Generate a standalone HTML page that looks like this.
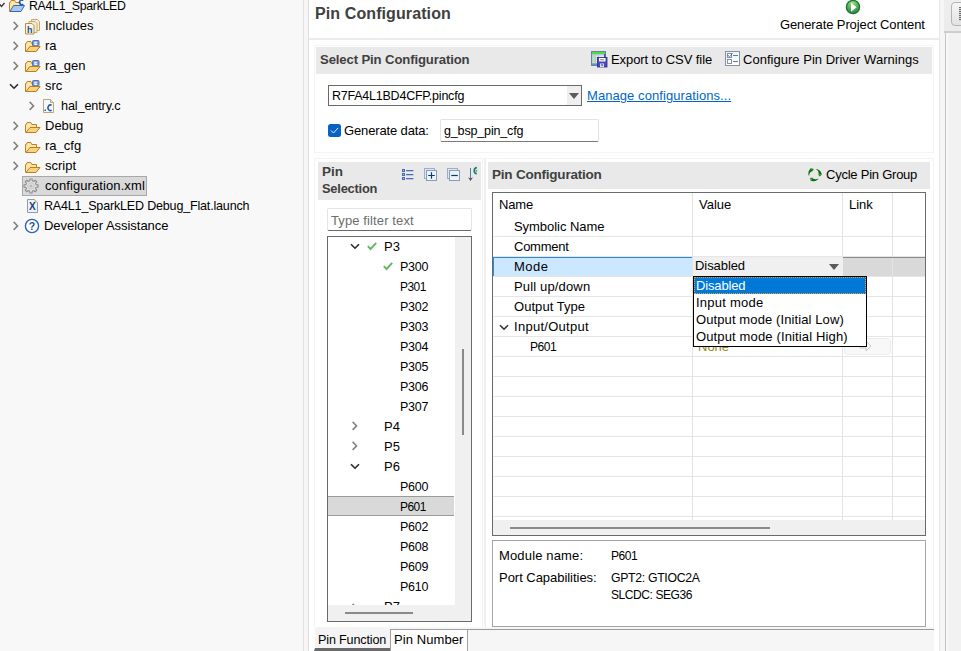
<!DOCTYPE html>
<html><head><meta charset="utf-8"><style>
html,body{margin:0;padding:0;width:961px;height:651px;overflow:hidden;background:#fff}
body{position:relative;font-family:"Liberation Sans",sans-serif}
.r{position:absolute;display:block}
.t{position:absolute;white-space:nowrap;font-family:"Liberation Sans",sans-serif}
svg.r{overflow:visible}
</style></head><body>
<div class="r" style="left:0px;top:0px;width:303px;height:651px;background:#f8f8f8"></div>
<div class="r" style="left:303px;top:0px;width:1px;height:651px;background:#e2e2e2"></div>
<div class="r" style="left:304px;top:0px;width:4px;height:651px;background:#f6f6f6"></div>
<div class="r" style="left:308px;top:0px;width:1px;height:651px;background:#dedede"></div>
<svg class="r" style="left:-2px;top:2px" width="7" height="7" viewBox="0 0 7 7"><path d="M0.5 1 L3.5 4.5 L6.5 1" fill="none" stroke="#333" stroke-width="1.3"/></svg>
<svg class="r" style="left:9px;top:-2px" width="16" height="16" viewBox="0 0 16 16"><path d="M0.5 13.5 V4.5 H1.2 L2.2 2.5 H5.8 L6.8 4.5 H11.5 V8" fill="#fbe7a8" stroke="#c27c22"/><path d="M1 13.5 L4.5 7.5 H15.5 L12 13.5 Z" fill="#a8c8f0" stroke="#3a68b8" stroke-linejoin="round"/><path d="M14.2 2.6 A2.2 2.4 0 1 0 14.2 6.2" fill="none" stroke="#2a5aa8" stroke-width="1.6"/></svg>
<div class="t" style="left:29px;top:-2px;font-size:13px;line-height:16px;font-weight:normal;color:#000;letter-spacing:-0.302px;transform:scaleX(0.9474);transform-origin:0.00px 0;">RA4L1_SparkLED</div>
<svg class="r" style="left:12px;top:21px" width="7" height="10" viewBox="0 0 7 10"><path d="M1.6 0.9 L5.6 4.9 L1.6 8.9" fill="none" stroke="#808080" stroke-width="1.5"/></svg>
<svg class="r" style="left:25px;top:18px" width="16" height="17" viewBox="0 0 16 17"><path d="M6.5 1.5 h6 l2 2 v9 h-8 z" fill="#f3ecd8" stroke="#c8a868"/><path d="M4 3.5 h6 l2 2 v9 h-8 z" fill="#f3ecd8" stroke="#c8a868"/><path d="M0.5 5.5 h6.5 l2 2 v8.5 h-8.5 z" fill="#f6f3ea" stroke="#b8903a"/><text x="4.7" y="14.6" font-size="9" font-family="Liberation Sans" font-weight="bold" fill="#1f4a8a" text-anchor="middle">h</text></svg>
<div class="t" style="left:45px;top:18px;font-size:13px;line-height:16px;font-weight:normal;color:#000;">Includes</div>
<svg class="r" style="left:12px;top:41px" width="7" height="10" viewBox="0 0 7 10"><path d="M1.6 0.9 L5.6 4.9 L1.6 8.9" fill="none" stroke="#808080" stroke-width="1.5"/></svg>
<svg class="r" style="left:25px;top:39px" width="16" height="16" viewBox="0 0 16 16"><g transform="translate(0 -1)"><path d="M0.5 13.5 V5.5 H1.2 L2.2 3.5 H5.8 L6.8 5.5 H11.5 V9" fill="#fbe7a8" stroke="#c27c22" stroke-width="1"/><path d="M1 13.5 L5 8.5 H15 L11 13.5 Z" fill="#f7d580" stroke="#c27c22" stroke-width="1" stroke-linejoin="round"/></g><rect x="7.5" y="1.5" width="6.5" height="5.5" rx="1" fill="#7a9ad8" stroke="#5272b2" stroke-width="1"/><path d="M12.2 3.2 h-2.2 v2.2 h2.2" fill="none" stroke="#fff" stroke-width="1.1"/><path d="M1 12.5 L5 7.5 H15 L11 12.5 Z" fill="#f7d580" stroke="#c27c22" stroke-width="1" stroke-linejoin="round"/></svg>
<div class="t" style="left:45px;top:38px;font-size:13px;line-height:16px;font-weight:normal;color:#000;">ra</div>
<svg class="r" style="left:12px;top:61px" width="7" height="10" viewBox="0 0 7 10"><path d="M1.6 0.9 L5.6 4.9 L1.6 8.9" fill="none" stroke="#808080" stroke-width="1.5"/></svg>
<svg class="r" style="left:25px;top:59px" width="16" height="16" viewBox="0 0 16 16"><g transform="translate(0 -1)"><path d="M0.5 13.5 V5.5 H1.2 L2.2 3.5 H5.8 L6.8 5.5 H11.5 V9" fill="#fbe7a8" stroke="#c27c22" stroke-width="1"/><path d="M1 13.5 L5 8.5 H15 L11 13.5 Z" fill="#f7d580" stroke="#c27c22" stroke-width="1" stroke-linejoin="round"/></g><rect x="7.5" y="1.5" width="6.5" height="5.5" rx="1" fill="#7a9ad8" stroke="#5272b2" stroke-width="1"/><path d="M12.2 3.2 h-2.2 v2.2 h2.2" fill="none" stroke="#fff" stroke-width="1.1"/><path d="M1 12.5 L5 7.5 H15 L11 12.5 Z" fill="#f7d580" stroke="#c27c22" stroke-width="1" stroke-linejoin="round"/></svg>
<div class="t" style="left:45px;top:58px;font-size:13px;line-height:16px;font-weight:normal;color:#000;">ra_gen</div>
<svg class="r" style="left:9px;top:83px" width="10" height="7" viewBox="0 0 10 7"><path d="M1 1.2 L5 5.2 L9 1.2" fill="none" stroke="#2a2a2a" stroke-width="1.6"/></svg>
<svg class="r" style="left:25px;top:79px" width="16" height="16" viewBox="0 0 16 16"><g transform="translate(0 -1)"><path d="M0.5 13.5 V5.5 H1.2 L2.2 3.5 H5.8 L6.8 5.5 H11.5 V9" fill="#fbe7a8" stroke="#c27c22" stroke-width="1"/><path d="M1 13.5 L5 8.5 H15 L11 13.5 Z" fill="#f7d580" stroke="#c27c22" stroke-width="1" stroke-linejoin="round"/></g><rect x="7.5" y="1.5" width="6.5" height="5.5" rx="1" fill="#7a9ad8" stroke="#5272b2" stroke-width="1"/><path d="M12.2 3.2 h-2.2 v2.2 h2.2" fill="none" stroke="#fff" stroke-width="1.1"/><path d="M1 12.5 L5 7.5 H15 L11 12.5 Z" fill="#f7d580" stroke="#c27c22" stroke-width="1" stroke-linejoin="round"/></svg>
<div class="t" style="left:45px;top:78px;font-size:13px;line-height:16px;font-weight:normal;color:#000;">src</div>
<svg class="r" style="left:28px;top:101px" width="7" height="10" viewBox="0 0 7 10"><path d="M1.6 0.9 L5.6 4.9 L1.6 8.9" fill="none" stroke="#808080" stroke-width="1.5"/></svg>
<svg class="r" style="left:42px;top:98px" width="13" height="16" viewBox="0 0 13 16"><path d="M1.5 1.5 h7 l3 3 v10 h-10 z" fill="#f4f7fc" stroke="#b8a878"/><path d="M8.5 1.5 v3 h3" fill="#e8e0c8" stroke="#b8a878"/><rect x="2.5" y="11.5" width="1.5" height="1.5" fill="#2a5aa8"/><path d="M9.6 7.4 A2.4 2.8 0 1 0 9.6 12.2" fill="none" stroke="#2a5aa8" stroke-width="1.6"/></svg>
<div class="t" style="left:61px;top:98px;font-size:13px;line-height:16px;font-weight:normal;color:#000;letter-spacing:-0.124px;transform:scaleX(0.9714);transform-origin:0.00px 0;">hal_entry.c</div>
<svg class="r" style="left:12px;top:121px" width="7" height="10" viewBox="0 0 7 10"><path d="M1.6 0.9 L5.6 4.9 L1.6 8.9" fill="none" stroke="#808080" stroke-width="1.5"/></svg>
<svg class="r" style="left:25px;top:119px" width="16" height="16" viewBox="0 0 16 16"><g transform="translate(0 0)"><path d="M0.5 13.5 V5.5 H1.2 L2.2 3.5 H5.8 L6.8 5.5 H11.5 V9" fill="#fbe7a8" stroke="#c27c22" stroke-width="1"/><path d="M1 13.5 L5 8.5 H15 L11 13.5 Z" fill="#f7d580" stroke="#c27c22" stroke-width="1" stroke-linejoin="round"/></g></svg>
<div class="t" style="left:45px;top:118px;font-size:13px;line-height:16px;font-weight:normal;color:#000;">Debug</div>
<svg class="r" style="left:12px;top:141px" width="7" height="10" viewBox="0 0 7 10"><path d="M1.6 0.9 L5.6 4.9 L1.6 8.9" fill="none" stroke="#808080" stroke-width="1.5"/></svg>
<svg class="r" style="left:25px;top:139px" width="16" height="16" viewBox="0 0 16 16"><g transform="translate(0 0)"><path d="M0.5 13.5 V5.5 H1.2 L2.2 3.5 H5.8 L6.8 5.5 H11.5 V9" fill="#fbe7a8" stroke="#c27c22" stroke-width="1"/><path d="M1 13.5 L5 8.5 H15 L11 13.5 Z" fill="#f7d580" stroke="#c27c22" stroke-width="1" stroke-linejoin="round"/></g></svg>
<div class="t" style="left:45px;top:138px;font-size:13px;line-height:16px;font-weight:normal;color:#000;">ra_cfg</div>
<svg class="r" style="left:12px;top:161px" width="7" height="10" viewBox="0 0 7 10"><path d="M1.6 0.9 L5.6 4.9 L1.6 8.9" fill="none" stroke="#808080" stroke-width="1.5"/></svg>
<svg class="r" style="left:25px;top:159px" width="16" height="16" viewBox="0 0 16 16"><g transform="translate(0 0)"><path d="M0.5 13.5 V5.5 H1.2 L2.2 3.5 H5.8 L6.8 5.5 H11.5 V9" fill="#fbe7a8" stroke="#c27c22" stroke-width="1"/><path d="M1 13.5 L5 8.5 H15 L11 13.5 Z" fill="#f7d580" stroke="#c27c22" stroke-width="1" stroke-linejoin="round"/></g></svg>
<div class="t" style="left:45px;top:158px;font-size:13px;line-height:16px;font-weight:normal;color:#000;">script</div>
<div class="r" style="left:22px;top:176px;width:125px;height:20px;background:#d9d9d9;border:1px solid #a8a8a8;box-sizing:border-box"></div>
<svg class="r" style="left:23px;top:178px" width="16" height="16" viewBox="0 0 16 16"><path d="M13.14 6.72 L15.01 6.89 L15.01 9.11 L13.14 9.28 L12.54 10.73 L13.74 12.17 L12.17 13.74 L10.73 12.54 L9.28 13.14 L9.11 15.01 L6.89 15.01 L6.72 13.14 L5.27 12.54 L3.83 13.74 L2.26 12.17 L3.46 10.73 L2.86 9.28 L0.99 9.11 L0.99 6.89 L2.86 6.72 L3.46 5.27 L2.26 3.83 L3.83 2.26 L5.27 3.46 L6.72 2.86 L6.89 0.99 L9.11 0.99 L9.28 2.86 L10.73 3.46 L12.17 2.26 L13.74 3.83 L12.54 5.27 Z" fill="#e2e2e2" stroke="#8e8e8e" stroke-width="1.1" stroke-linejoin="round"/><circle cx="8" cy="8" r="3.2" fill="none" stroke="#c4c4c4" stroke-width="1"/><circle cx="8" cy="8" r="1.6" fill="#b8b8b8"/></svg>
<div class="t" style="left:45px;top:178px;font-size:13px;line-height:16px;font-weight:normal;color:#000;letter-spacing:0.094px;">configuration.xml</div>
<svg class="r" style="left:26px;top:198px" width="13" height="16" viewBox="0 0 13 16"><path d="M1.5 1.5 h7 l3 3 v10 h-10 z" fill="#eef3fb" stroke="#8e9ab8"/><path d="M8.5 1.5 l3 3 h-3 z" fill="#f0c060"/><text x="6.3" y="12.3" font-size="10" font-family="Liberation Sans" font-weight="bold" fill="#1f3f78" text-anchor="middle">X</text></svg>
<div class="t" style="left:44px;top:198px;font-size:13px;line-height:16px;font-weight:normal;color:#000;letter-spacing:-0.181px;transform:scaleX(0.9630);transform-origin:0.00px 0;">RA4L1_SparkLED Debug_Flat.launch</div>
<svg class="r" style="left:12px;top:221px" width="7" height="10" viewBox="0 0 7 10"><path d="M1.6 0.9 L5.6 4.9 L1.6 8.9" fill="none" stroke="#808080" stroke-width="1.5"/></svg>
<svg class="r" style="left:24px;top:218px" width="16" height="16" viewBox="0 0 16 16"><circle cx="8" cy="8" r="6.6" fill="#fff" stroke="#2c64b4" stroke-width="1.4"/><text x="8" y="12.3" font-size="10.5" font-family="Liberation Sans" font-weight="bold" fill="#1f4f98" text-anchor="middle">?</text></svg>
<div class="t" style="left:44px;top:218px;font-size:13px;line-height:16px;font-weight:normal;color:#000;letter-spacing:-0.026px;">Developer Assistance</div>
<div class="r" style="left:309px;top:0px;width:631px;height:651px;background:#fff"></div>
<div class="t" style="left:315px;top:4px;font-size:16px;line-height:20px;font-weight:bold;color:#404040;letter-spacing:0.100px;">Pin Configuration</div>
<svg class="r" style="left:845px;top:-1px" width="16" height="16" viewBox="0 0 16 16"><defs><radialGradient id="gg" cx="0.45" cy="0.2" r="0.8"><stop offset="0" stop-color="#a0e080"/><stop offset="0.6" stop-color="#50a85a"/><stop offset="1" stop-color="#2e8a40"/></radialGradient></defs><circle cx="8" cy="8" r="6.6" fill="url(#gg)" stroke="#177a32" stroke-width="1.3"/><path d="M6 3.8 L11.6 8.3 L6 12.8 z" fill="#fff"/></svg>
<div class="t" style="left:780px;top:17px;font-size:13px;line-height:16px;font-weight:normal;color:#000;letter-spacing:-0.109px;">Generate Project Content</div>
<div class="r" style="left:309px;top:38px;width:631px;height:2px;background:#ececec"></div>
<div class="r" style="left:939px;top:0px;width:1px;height:651px;background:#e6e6e6"></div>
<div class="r" style="left:940px;top:0px;width:5px;height:651px;background:#f6f6f6"></div>
<div class="r" style="left:944px;top:0px;width:17px;height:31px;background:linear-gradient(#eeeeee,#ebebeb)"></div>
<div class="r" style="left:945px;top:31px;width:1px;height:620px;background:#c4c4c4"></div>
<div class="r" style="left:946px;top:33px;width:15px;height:618px;background:#f2f2f2"></div>
<div class="r" style="left:946px;top:33px;width:2px;height:618px;background:#f8f8f8"></div>
<div class="r" style="left:944px;top:31px;width:17px;height:2px;background:#cdcdcd"></div>
<div class="r" style="left:951px;top:2px;width:14px;height:24px;background:linear-gradient(#f6f6f6,#e2e2e2);border:1px solid #b4b4b4;border-radius:4px;box-sizing:border-box"></div>
<svg class="r" style="left:958px;top:7px" width="4" height="13" viewBox="0 0 4 13"><g fill="#6e6e6e"><rect x="1" y="0" width="3" height="1.2"/><rect x="1" y="2" width="3" height="1.2"/><rect x="1" y="4" width="3" height="1.2"/><rect x="1" y="6" width="3" height="1.2"/><rect x="1" y="8" width="3" height="1.2"/><rect x="1" y="10" width="3" height="1.2"/><rect x="1" y="12" width="3" height="1.2"/></g></svg>
<div class="r" style="left:314px;top:45px;width:620px;height:108px;border:1px solid #f4f4f4;box-sizing:border-box"></div>
<div class="r" style="left:316px;top:47px;width:616px;height:27px;background:#e9e9e9"></div>
<div class="t" style="left:320px;top:52px;font-size:13.5px;line-height:16px;font-weight:bold;color:#404040;letter-spacing:-0.129px;transform:scaleX(0.9725);transform-origin:0.00px 0;">Select Pin Configuration</div>
<svg class="r" style="left:591px;top:51px" width="17" height="17" viewBox="0 0 17 17"><rect x="0.5" y="0.5" width="14" height="14" fill="#b8c4d4" stroke="#7080a0"/><rect x="1" y="1" width="13" height="2" fill="#48e048"/><rect x="1.5" y="4.5" width="2.5" height="1.4" fill="#b8f0a8"/><rect x="5" y="4.5" width="2" height="1.4" fill="#e8f0ff"/><rect x="8" y="4.5" width="5" height="1.4" fill="#eef4ff"/><rect x="1.5" y="6.5" width="2.5" height="1.4" fill="#b8f0a8"/><rect x="5" y="6.5" width="2" height="1.4" fill="#e8f0ff"/><rect x="8" y="6.5" width="5" height="1.4" fill="#eef4ff"/><rect x="1.5" y="8.5" width="2.5" height="1.4" fill="#b8f0a8"/><rect x="5" y="8.5" width="2" height="1.4" fill="#e8f0ff"/><rect x="8" y="8.5" width="5" height="1.4" fill="#eef4ff"/><rect x="1.5" y="10.5" width="2.5" height="1.4" fill="#b8f0a8"/><rect x="5" y="10.5" width="2" height="1.4" fill="#e8f0ff"/><rect x="8" y="10.5" width="5" height="1.4" fill="#eef4ff"/><rect x="1" y="12.5" width="13" height="1.5" fill="#5a90e0"/><rect x="13" y="3" width="1.5" height="10" fill="#3a5a90"/><rect x="6.5" y="6.5" width="9.5" height="9.5" fill="#4a4ab8" stroke="#2a2a90" stroke-width="0.8"/><rect x="8" y="7" width="6.5" height="3.5" fill="#fafafa"/><rect x="9" y="8.2" width="4" height="1" fill="#888"/><rect x="9" y="12.5" width="4" height="3.5" fill="#d8d8e8"/><rect x="10.5" y="13" width="1.2" height="2" fill="#4a4ab8"/></svg>
<div class="t" style="left:611px;top:52px;font-size:13px;line-height:16px;font-weight:normal;color:#000;letter-spacing:-0.082px;">Export to CSV file</div>
<svg class="r" style="left:724px;top:50px" width="17" height="17" viewBox="0 0 17 17"><defs><linearGradient id="cg" x1="0" y1="0" x2="0" y2="1"><stop offset="0" stop-color="#e2f8fc"/><stop offset="1" stop-color="#ffffff"/></linearGradient></defs><rect x="1.5" y="1.5" width="14" height="14" fill="url(#cg)" stroke="#8890a8" stroke-width="1"/><rect x="3.5" y="3.5" width="4" height="4" fill="#fff" stroke="#8890a8"/><path d="M4 5.3 L5.4 7 L8.5 3.3" fill="none" stroke="#203a60" stroke-width="1" stroke-dasharray="1 0.6"/><line x1="9" y1="5.5" x2="14" y2="5.5" stroke="#6878a0" stroke-width="1"/><rect x="3.5" y="9.5" width="4" height="4" fill="#fff" stroke="#8890a8"/><line x1="9" y1="11.5" x2="14" y2="11.5" stroke="#6878a0" stroke-width="1"/></svg>
<div class="t" style="left:743px;top:52px;font-size:13px;line-height:16px;font-weight:normal;color:#000;letter-spacing:0.021px;">Configure Pin Driver Warnings</div>
<div class="r" style="left:328px;top:85px;width:254px;height:21px;background:#fff;border:1px solid #6a6a6a;box-sizing:border-box"></div>
<div class="r" style="left:567px;top:86px;width:14px;height:19px;background:#efefef"></div>
<svg class="r" style="left:569px;top:93px" width="10" height="7" viewBox="0 0 10 7"><path d="M0 0 H10 L5 6 z" fill="#5a5a5a"/></svg>
<div class="t" style="left:332px;top:88px;font-size:13px;line-height:16px;font-weight:normal;color:#000;letter-spacing:-0.215px;transform:scaleX(0.9586);transform-origin:0.00px 0;">R7FA4L1BD4CFP.pincfg</div>
<div class="t" style="left:587px;top:88px;font-size:13px;line-height:16px;font-weight:normal;color:#0066cc;letter-spacing:0.074px;text-decoration:underline">Manage configurations...</div>
<div class="r" style="left:328px;top:124px;width:13px;height:13px;background:#0862c4;border-radius:2.5px"></div>
<svg class="r" style="left:328px;top:124px" width="13" height="13" viewBox="0 0 13 13"><path d="M3 6.5 L5.5 9 L10 4" fill="none" stroke="#eef4ff" stroke-width="0.95"/></svg>
<div class="t" style="left:344px;top:123px;font-size:13px;line-height:16px;font-weight:normal;color:#000;letter-spacing:-0.138px;">Generate data:</div>
<div class="r" style="left:440px;top:119px;width:159px;height:23px;background:#fff;border:1px solid #e2e2e2;border-bottom:1px solid #7a7a7a;box-sizing:border-box;border-radius:2px"></div>
<div class="t" style="left:444px;top:123px;font-size:13px;line-height:16px;font-weight:normal;color:#000;letter-spacing:-0.176px;transform:scaleX(0.9640);transform-origin:0.00px 0;">g_bsp_pin_cfg</div>
<div class="r" style="left:314px;top:158px;width:169px;height:469px;background:#fff;border:1px solid #f2f2f2;border-bottom:none;box-sizing:border-box"></div>
<div class="r" style="left:318px;top:162px;width:163px;height:38px;background:#e9e9e9"></div>
<div class="t" style="left:322px;top:164px;font-size:13.5px;line-height:16px;font-weight:bold;color:#404040;">Pin</div>
<div class="t" style="left:322px;top:181px;font-size:13.5px;line-height:16px;font-weight:bold;color:#404040;letter-spacing:-0.241px;transform:scaleX(0.9540);transform-origin:0.00px 0;">Selection</div>
<svg class="r" style="left:401px;top:169px" width="13" height="13" viewBox="0 0 13 13"><rect x="1" y="0" width="3" height="3" fill="#4a6cb0"/><rect x="2" y="1" width="1" height="1" fill="#a8bce0"/><rect x="5" y="1" width="7.5" height="1.2" rx="0.5" fill="#4a6cb0"/><rect x="1" y="4" width="3" height="3" fill="#4a6cb0"/><rect x="2" y="5" width="1" height="1" fill="#a8bce0"/><rect x="5" y="5" width="7.5" height="1.2" rx="0.5" fill="#4a6cb0"/><rect x="1" y="8" width="3" height="3" fill="#4a6cb0"/><rect x="2" y="9" width="1" height="1" fill="#a8bce0"/><rect x="5" y="9" width="7.5" height="1.2" rx="0.5" fill="#4a6cb0"/></svg>
<svg class="r" style="left:424px;top:168px" width="14" height="14" viewBox="0 0 14 14"><rect x="0.5" y="0.5" width="10" height="10" fill="#dceaf8" stroke="#a0acc8"/><rect x="2.5" y="2.5" width="10" height="10" fill="#eaf4fc" stroke="#8e9ab8"/><path d="M7.5 4.2 v6.6 M4.2 7.5 h6.6" stroke="#0a3a70" stroke-width="1.2"/></svg>
<svg class="r" style="left:447px;top:168px" width="14" height="14" viewBox="0 0 14 14"><rect x="0.5" y="0.5" width="10" height="10" fill="#dceaf8" stroke="#a0acc8"/><rect x="2.5" y="2.5" width="10" height="10" fill="#eaf4fc" stroke="#8e9ab8"/><path d="M4.2 7.5 h6.6" stroke="#0a3a70" stroke-width="1.2"/></svg>
<svg class="r" style="left:467px;top:166px" width="12" height="16" viewBox="0 0 12 16"><line x1="3.5" y1="2" x2="3.5" y2="13" stroke="#4a80b8" stroke-width="1"/><path d="M1 11.3 L3.5 15 L6 11.3 L3.5 12.6 Z" fill="#505050"/><path d="M9.8 1.6 Q7.2 1.8 7.2 4.8 Q7.2 7.6 9.8 7.6" fill="none" stroke="#1a8068" stroke-width="1.6"/><rect x="8.6" y="4.2" width="1.6" height="1.2" fill="#1a8068"/></svg>
<div class="r" style="left:327px;top:208px;width:145px;height:23px;background:#fff;border:1px solid #e4e4e4;border-bottom:1px solid #6a6a6a;box-sizing:border-box;border-radius:2px"></div>
<div class="t" style="left:331px;top:213px;font-size:13px;line-height:16px;font-weight:normal;color:#6d6d6d;letter-spacing:0.113px;">Type filter text</div>
<div class="r" style="left:327px;top:236px;width:145px;height:386px;background:#fff;border:1px solid #6a6a6a;box-sizing:border-box"></div>
<div class="r" style="left:455px;top:237px;width:16px;height:368px;background:#f0f0f0"></div>
<div class="r" style="left:462px;top:349px;width:2px;height:86px;background:#8a8a8a"></div>
<div class="r" style="left:328px;top:605px;width:143px;height:16px;background:#f0f0f0"></div>
<div class="r" style="left:345px;top:612px;width:68px;height:2px;background:#8a8a8a"></div>
<div class="r" style="left:328px;top:496px;width:126px;height:20px;background:#d9d9d9;border-top:1px solid #9a9a9a;border-bottom:1px solid #9a9a9a;box-sizing:border-box"></div>
<svg class="r" style="left:350px;top:243px" width="10" height="7" viewBox="0 0 10 7"><path d="M1 1.2 L5 5.2 L9 1.2" fill="none" stroke="#2a2a2a" stroke-width="1.6"/></svg>
<svg class="r" style="left:367px;top:242px" width="10" height="8" viewBox="0 0 10 8"><path d="M0.8 4.2 L3.6 7 L9.2 0.8" fill="none" stroke="#62b862" stroke-width="1.9"/></svg>
<div class="t" style="left:384px;top:239px;font-size:13px;line-height:16px;font-weight:normal;color:#000;">P3</div>
<svg class="r" style="left:383px;top:262px" width="10" height="8" viewBox="0 0 10 8"><path d="M0.8 4.2 L3.6 7 L9.2 0.8" fill="none" stroke="#62b862" stroke-width="1.9"/></svg>
<div class="t" style="left:400px;top:259px;font-size:13px;line-height:16px;font-weight:normal;color:#000;letter-spacing:-0.278px;transform:scaleX(0.9600);transform-origin:0.00px 0;">P300</div>
<div class="t" style="left:400px;top:279px;font-size:13px;line-height:16px;font-weight:normal;color:#000;letter-spacing:-0.580px;transform:scaleX(0.9200);transform-origin:0.00px 0;">P301</div>
<div class="t" style="left:400px;top:299px;font-size:13px;line-height:16px;font-weight:normal;color:#000;letter-spacing:-0.278px;transform:scaleX(0.9600);transform-origin:0.00px 0;">P302</div>
<div class="t" style="left:400px;top:319px;font-size:13px;line-height:16px;font-weight:normal;color:#000;letter-spacing:-0.278px;transform:scaleX(0.9600);transform-origin:0.00px 0;">P303</div>
<div class="t" style="left:400px;top:339px;font-size:13px;line-height:16px;font-weight:normal;color:#000;letter-spacing:-0.278px;transform:scaleX(0.9600);transform-origin:0.00px 0;">P304</div>
<div class="t" style="left:400px;top:359px;font-size:13px;line-height:16px;font-weight:normal;color:#000;letter-spacing:-0.278px;transform:scaleX(0.9600);transform-origin:0.00px 0;">P305</div>
<div class="t" style="left:400px;top:379px;font-size:13px;line-height:16px;font-weight:normal;color:#000;letter-spacing:-0.278px;transform:scaleX(0.9600);transform-origin:0.00px 0;">P306</div>
<div class="t" style="left:400px;top:399px;font-size:13px;line-height:16px;font-weight:normal;color:#000;letter-spacing:-0.278px;transform:scaleX(0.9600);transform-origin:0.00px 0;">P307</div>
<svg class="r" style="left:351px;top:421px" width="7" height="10" viewBox="0 0 7 10"><path d="M1.6 0.9 L5.6 4.9 L1.6 8.9" fill="none" stroke="#808080" stroke-width="1.5"/></svg>
<div class="t" style="left:384px;top:419px;font-size:13px;line-height:16px;font-weight:normal;color:#000;">P4</div>
<svg class="r" style="left:351px;top:441px" width="7" height="10" viewBox="0 0 7 10"><path d="M1.6 0.9 L5.6 4.9 L1.6 8.9" fill="none" stroke="#808080" stroke-width="1.5"/></svg>
<div class="t" style="left:384px;top:439px;font-size:13px;line-height:16px;font-weight:normal;color:#000;">P5</div>
<svg class="r" style="left:350px;top:463px" width="10" height="7" viewBox="0 0 10 7"><path d="M1 1.2 L5 5.2 L9 1.2" fill="none" stroke="#2a2a2a" stroke-width="1.6"/></svg>
<div class="t" style="left:384px;top:459px;font-size:13px;line-height:16px;font-weight:normal;color:#000;">P6</div>
<div class="t" style="left:400px;top:479px;font-size:13px;line-height:16px;font-weight:normal;color:#000;letter-spacing:-0.278px;transform:scaleX(0.9600);transform-origin:0.00px 0;">P600</div>
<div class="t" style="left:400px;top:499px;font-size:13px;line-height:16px;font-weight:normal;color:#000;letter-spacing:-0.580px;transform:scaleX(0.9200);transform-origin:0.00px 0;">P601</div>
<div class="t" style="left:400px;top:519px;font-size:13px;line-height:16px;font-weight:normal;color:#000;letter-spacing:-0.278px;transform:scaleX(0.9600);transform-origin:0.00px 0;">P602</div>
<div class="t" style="left:400px;top:539px;font-size:13px;line-height:16px;font-weight:normal;color:#000;letter-spacing:-0.278px;transform:scaleX(0.9600);transform-origin:0.00px 0;">P608</div>
<div class="t" style="left:400px;top:559px;font-size:13px;line-height:16px;font-weight:normal;color:#000;letter-spacing:-0.278px;transform:scaleX(0.9600);transform-origin:0.00px 0;">P609</div>
<div class="t" style="left:400px;top:579px;font-size:13px;line-height:16px;font-weight:normal;color:#000;letter-spacing:-0.278px;transform:scaleX(0.9600);transform-origin:0.00px 0;">P610</div>
<div class="r" style="left:328px;top:596px;width:126px;height:9px;overflow:hidden">
<svg class="r" style="left:23px;top:7px" width="7" height="10"><path d="M1.6 0.9 L5.6 4.9 L1.6 8.9" fill="none" stroke="#808080" stroke-width="1.5"/></svg><div class="t" style="left:56px;top:3px;font-size:13px;line-height:16px;color:#000">P7</div>
</div>
<div class="r" style="left:315px;top:627px;width:619px;height:24px;background:#f6f6f6"></div>
<div class="r" style="left:315px;top:627px;width:75px;height:22px;background:#f4f4f4"></div>
<svg class="r" style="left:314px;top:648px" width="78" height="3" viewBox="0 0 78 3"><path d="M1 0 H76 L77 3 H0 z" fill="#6a6a6a"/></svg>
<div class="t" style="left:318px;top:632px;font-size:13px;line-height:16px;font-weight:normal;color:#000;letter-spacing:-0.150px;transform:scaleX(0.9667);transform-origin:0.00px 0;">Pin Function</div>
<div class="r" style="left:390px;top:629px;width:78px;height:22px;background:#fdfdfd;border:1px solid #a0a0a0;border-bottom:none;box-sizing:border-box"></div>
<div class="t" style="left:394px;top:632px;font-size:13px;line-height:16px;font-weight:normal;color:#000;letter-spacing:0.089px;">Pin Number</div>
<div class="r" style="left:484px;top:158px;width:450px;height:469px;background:#fff;border-top:1px solid #f3f3f3;border-right:1px solid #f3f3f3;box-sizing:border-box"></div>
<div class="r" style="left:484px;top:158px;width:2px;height:469px;background:#efefef"></div>
<div class="r" style="left:488px;top:162px;width:442px;height:27px;background:#e9e9e9"></div>
<div class="t" style="left:492px;top:167px;font-size:13.5px;line-height:16px;font-weight:bold;color:#404040;letter-spacing:-0.212px;">Pin Configuration</div>
<svg class="r" style="left:806px;top:166px" width="17" height="17" viewBox="0 0 17 17"><path d="M2.88 9.70 L2.68 9.20 L2.54 8.68 L2.44 8.14 L2.39 7.58 L2.39 7.01 L2.45 6.43 L2.56 5.86 L2.73 5.28 L2.95 4.72 L3.23 4.17 L3.56 3.64 L3.95 3.13 L4.39 2.66 L4.87 2.22 L6.52 5.08 L6.16 5.18 L5.81 5.32 L5.46 5.50 L5.12 5.72 L4.79 5.97 L4.49 6.26 L4.21 6.59 L3.95 6.95 L3.73 7.33 L3.53 7.75 L3.38 8.19 L3.27 8.66 L3.20 9.14 L3.17 9.63 Z" fill="#0a700a"/><path d="M4.70 1.92 L7.72 2.95 L6.70 5.38 Z" fill="#129012"/><path d="M10.28 3.03 L10.80 3.11 L11.33 3.25 L11.84 3.43 L12.35 3.67 L12.84 3.96 L13.31 4.29 L13.76 4.68 L14.17 5.11 L14.55 5.59 L14.89 6.10 L15.18 6.66 L15.42 7.24 L15.61 7.86 L15.75 8.50 L12.45 8.50 L12.54 8.14 L12.60 7.76 L12.62 7.36 L12.60 6.96 L12.54 6.55 L12.44 6.14 L12.30 5.74 L12.12 5.34 L11.90 4.95 L11.63 4.57 L11.33 4.22 L10.98 3.89 L10.60 3.59 L10.18 3.32 Z" fill="#0a700a"/><path d="M16.10 8.50 L13.69 10.60 L12.10 8.50 Z" fill="#129012"/><path d="M12.35 12.77 L12.01 13.19 L11.64 13.57 L11.22 13.93 L10.76 14.25 L10.26 14.53 L9.74 14.77 L9.18 14.96 L8.60 15.11 L8.00 15.20 L7.38 15.23 L6.76 15.21 L6.13 15.12 L5.50 14.98 L4.88 14.78 L6.53 11.92 L6.79 12.18 L7.10 12.42 L7.43 12.63 L7.78 12.82 L8.16 12.97 L8.57 13.09 L8.99 13.17 L9.43 13.22 L9.88 13.22 L10.33 13.17 L10.79 13.09 L11.25 12.95 L11.70 12.77 L12.15 12.55 Z" fill="#0a700a"/><path d="M4.70 15.08 L4.09 11.95 L6.70 11.62 Z" fill="#129012"/></svg>
<div class="t" style="left:826px;top:167px;font-size:13px;line-height:16px;font-weight:normal;color:#000;letter-spacing:-0.236px;">Cycle Pin Group</div>
<div class="r" style="left:492px;top:192px;width:434px;height:344px;background:#fff;border:1px solid #6a6a6a;box-sizing:border-box"></div>
<div class="r" style="left:493px;top:236px;width:432px;height:1px;background:#e6e6e6"></div>
<div class="r" style="left:493px;top:256px;width:432px;height:1px;background:#e6e6e6"></div>
<div class="r" style="left:493px;top:276px;width:432px;height:1px;background:#e6e6e6"></div>
<div class="r" style="left:493px;top:296px;width:432px;height:1px;background:#e6e6e6"></div>
<div class="r" style="left:493px;top:316px;width:432px;height:1px;background:#e6e6e6"></div>
<div class="r" style="left:493px;top:336px;width:432px;height:1px;background:#e6e6e6"></div>
<div class="r" style="left:493px;top:356px;width:432px;height:1px;background:#e6e6e6"></div>
<div class="r" style="left:493px;top:376px;width:432px;height:1px;background:#e6e6e6"></div>
<div class="r" style="left:493px;top:396px;width:432px;height:1px;background:#e6e6e6"></div>
<div class="r" style="left:493px;top:416px;width:432px;height:1px;background:#e6e6e6"></div>
<div class="r" style="left:493px;top:436px;width:432px;height:1px;background:#e6e6e6"></div>
<div class="r" style="left:493px;top:456px;width:432px;height:1px;background:#e6e6e6"></div>
<div class="r" style="left:493px;top:476px;width:432px;height:1px;background:#e6e6e6"></div>
<div class="r" style="left:493px;top:496px;width:432px;height:1px;background:#e6e6e6"></div>
<div class="r" style="left:493px;top:516px;width:432px;height:1px;background:#e6e6e6"></div>
<div class="r" style="left:692px;top:193px;width:1px;height:327px;background:#e3e3e3"></div>
<div class="r" style="left:842px;top:193px;width:1px;height:327px;background:#e3e3e3"></div>
<div class="r" style="left:892px;top:193px;width:1px;height:327px;background:#e3e3e3"></div>
<div class="t" style="left:499px;top:197px;font-size:13px;line-height:16px;font-weight:normal;color:#000;letter-spacing:-0.133px;">Name</div>
<div class="t" style="left:699px;top:197px;font-size:13px;line-height:16px;font-weight:normal;color:#000;">Value</div>
<div class="t" style="left:849px;top:197px;font-size:13px;line-height:16px;font-weight:normal;color:#000;">Link</div>
<div class="t" style="left:514px;top:219px;font-size:13px;line-height:16px;font-weight:normal;color:#000;letter-spacing:-0.050px;">Symbolic Name</div>
<div class="t" style="left:514px;top:239px;font-size:13px;line-height:16px;font-weight:normal;color:#000;letter-spacing:-0.250px;">Comment</div>
<div class="r" style="left:493px;top:257px;width:199px;height:19px;background:#cce8ff"></div>
<div class="r" style="left:493px;top:257px;width:199px;height:1px;background:#2a88e0"></div>
<div class="r" style="left:493px;top:257px;width:1px;height:19px;background:#2a88e0"></div>
<div class="r" style="left:693px;top:257px;width:150px;height:19px;background:#f0f0f0"></div>
<div class="r" style="left:826px;top:257px;width:16px;height:19px;background:#f0f0f0"></div>
<svg class="r" style="left:829px;top:264px" width="10" height="7" viewBox="0 0 10 7"><path d="M0 0 H10 L5 6 z" fill="#5a5a5a"/></svg>
<div class="r" style="left:843px;top:257px;width:82px;height:19px;background:#d9d9d9"></div>
<div class="r" style="left:892px;top:258px;width:1px;height:18px;background:#e4e4e4"></div>
<div class="r" style="left:843px;top:257px;width:82px;height:1px;background:#8a8a8a"></div>
<div class="t" style="left:514px;top:259px;font-size:13px;line-height:16px;font-weight:normal;color:#000;letter-spacing:0.467px;">Mode</div>
<div class="t" style="left:695px;top:258px;font-size:13px;line-height:16px;font-weight:normal;color:#000;letter-spacing:-0.071px;">Disabled</div>
<div class="t" style="left:514px;top:279px;font-size:13px;line-height:16px;font-weight:normal;color:#000;letter-spacing:0.155px;">Pull up/down</div>
<div class="t" style="left:514px;top:299px;font-size:13px;line-height:16px;font-weight:normal;color:#000;letter-spacing:0.050px;">Output Type</div>
<svg class="r" style="left:499px;top:324px" width="10" height="7" viewBox="0 0 10 7"><path d="M1 1.2 L5 5.2 L9 1.2" fill="none" stroke="#333" stroke-width="1.6"/></svg>
<div class="t" style="left:514px;top:319px;font-size:13px;line-height:16px;font-weight:normal;color:#000;letter-spacing:0.273px;">Input/Output</div>
<div class="t" style="left:530px;top:339px;font-size:13px;line-height:16px;font-weight:normal;color:#000;letter-spacing:-0.502px;transform:scaleX(0.9300);transform-origin:0.00px 0;">P601</div>
<div class="t" style="left:698px;top:339px;font-size:13px;line-height:16px;font-weight:normal;color:#968a14;">None</div>
<div class="r" style="left:844px;top:338px;width:47px;height:17px;background:#f8f8f8;border:1px solid #ececec;border-radius:4px;box-sizing:border-box"></div>
<svg class="r" style="left:859px;top:340px" width="14" height="12" viewBox="0 0 14 12"><path d="M1 4 h6 v-3 l5 5 l-5 5 v-3 h-6 z" fill="#f6f6f6" stroke="#c8c8c8"/></svg>
<div class="r" style="left:493px;top:520px;width:432px;height:15px;background:#f0f0f0"></div>
<div class="r" style="left:510px;top:527px;width:260px;height:2px;background:#8a8a8a"></div>
<div class="r" style="left:693px;top:276px;width:174px;height:71px;background:#fff;border:1px solid #000;box-sizing:border-box"></div>
<div class="r" style="left:694px;top:277px;width:172px;height:17px;background:#0078d7;outline:1px dotted #f0a030;outline-offset:-1px"></div>
<div class="t" style="left:696px;top:278px;font-size:13px;line-height:16px;font-weight:normal;color:#fff;letter-spacing:-0.143px;">Disabled</div>
<div class="t" style="left:696px;top:295px;font-size:13px;line-height:16px;font-weight:normal;color:#000;letter-spacing:0.244px;">Input mode</div>
<div class="t" style="left:696px;top:312px;font-size:13px;line-height:16px;font-weight:normal;color:#000;letter-spacing:0.104px;">Output mode (Initial Low)</div>
<div class="t" style="left:696px;top:329px;font-size:13px;line-height:16px;font-weight:normal;color:#000;letter-spacing:0.140px;">Output mode (Initial High)</div>
<div class="r" style="left:492px;top:540px;width:434px;height:87px;background:#fff;border:1px solid #a4a4ac;box-sizing:border-box"></div>
<div class="t" style="left:499px;top:548px;font-size:13px;line-height:16px;font-weight:normal;color:#000;letter-spacing:0.155px;">Module name:</div>
<div class="t" style="left:611px;top:548px;font-size:13px;line-height:16px;font-weight:normal;color:#000;letter-spacing:-0.517px;transform:scaleX(0.9280);transform-origin:0.00px 0;">P601</div>
<div class="t" style="left:499px;top:570px;font-size:13px;line-height:16px;font-weight:normal;color:#000;letter-spacing:-0.035px;">Port Capabilities:</div>
<div class="t" style="left:611px;top:570px;font-size:13px;line-height:16px;font-weight:normal;color:#000;letter-spacing:-0.332px;transform:scaleX(0.9430);transform-origin:0.00px 0;">GPT2: GTIOC2A</div>
<div class="t" style="left:611px;top:587px;font-size:13px;line-height:16px;font-weight:normal;color:#000;letter-spacing:-0.460px;transform:scaleX(0.9245);transform-origin:0.00px 0;">SLCDC: SEG36</div>
<div class="r" style="left:468px;top:629px;width:466px;height:1px;background:#9a9a9a"></div>
</body></html>
